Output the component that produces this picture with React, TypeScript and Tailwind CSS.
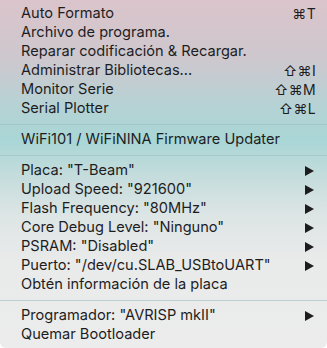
import React from "react";

type Item = { label: string; shortcut?: string; submenu?: boolean } | "sep";

const items: Item[] = [
  { label: "Auto Formato", shortcut: "⌘T" },
  { label: "Archivo de programa." },
  { label: "Reparar codificación & Recargar." },
  { label: "Administrar Bibliotecas...", shortcut: "⇧⌘I" },
  { label: "Monitor Serie", shortcut: "⇧⌘M" },
  { label: "Serial Plotter", shortcut: "⇧⌘L" },
  "sep",
  { label: "WiFi101 / WiFiNINA Firmware Updater" },
  "sep",
  { label: 'Placa: "T-Beam"', submenu: true },
  { label: 'Upload Speed: "921600"', submenu: true },
  { label: 'Flash Frequency: "80MHz"', submenu: true },
  { label: 'Core Debug Level: "Ninguno"', submenu: true },
  { label: 'PSRAM: "Disabled"', submenu: true },
  { label: 'Puerto: "/dev/cu.SLAB_USBtoUART"', submenu: true },
  { label: "Obtén información de la placa" },
  "sep",
  { label: 'Programador: "AVRISP mkII"', submenu: true },
  { label: "Quemar Bootloader" },
];

function Arrow() {
  return (
    <svg width="9" height="10" viewBox="0 0 9 10" className="block">
      <path d="M0 0 L9 5 L0 10 Z" fill="#1d1d1f" />
    </svg>
  );
}

export default function App() {
  return (
    <div className="w-[327px] h-[348px] bg-white">
      <div
        className="w-[327px] h-[348px] rounded-b-[6px] pt-[4px] pb-[5px] text-[14.6px] text-[#1d1d1f] bg-[linear-gradient(180deg,#dbc4cb_0px,#cdc8ce_60px,#b4d3d5_110px,#a9d6d6_140px,#c4dcdc_175px,#dde5e5_215px,#e9eaea_260px,#ececec_348px)]"
        style={{ fontFamily: "Inter, 'Noto Sans', sans-serif" }}
      >
        {items.map((it, i) =>
          it === "sep" ? (
            <div key={i} className="h-[12px] flex items-center">
              <div className="h-px w-full bg-[#9fbcbd]/60" />
            </div>
          ) : (
            <div key={i} className="h-[19px] flex items-center pl-[21px] pr-[11px] leading-none">
              <span className="flex-1 whitespace-nowrap">{it.label}</span>
              {it.shortcut && (
                <span className="text-[14px] tracking-[0.3px]">{it.shortcut}</span>
              )}
              {it.submenu && (
                <span className="pr-[2px]">
                  <Arrow />
                </span>
              )}
            </div>
          )
        )}
      </div>
    </div>
  );
}
